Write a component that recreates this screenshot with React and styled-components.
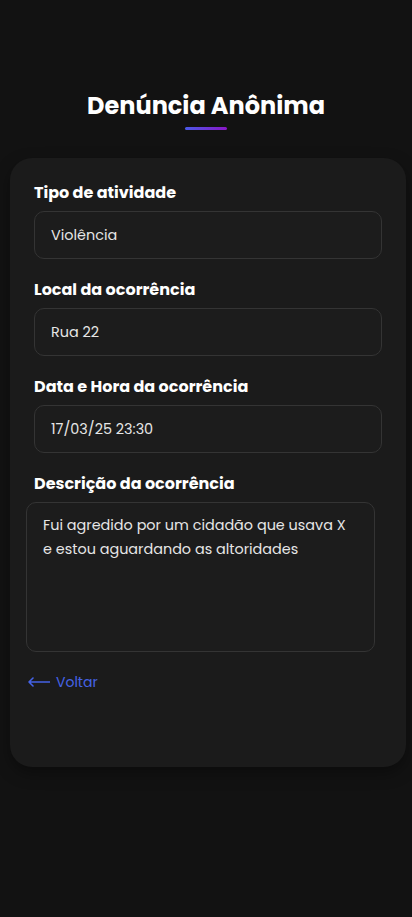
import React from 'react';
import styled, { createGlobalStyle } from 'styled-components';

const GlobalStyle = createGlobalStyle`
  html, body {
    margin: 0;
    padding: 0;
    background: #121212;
  }
  body {
    font-family: "Poppins", "Inter", "Noto Sans", sans-serif;
    color: #ffffff;
  }
`;

const Page = styled.div`
  min-height: 917px;
  background: #121212;
  padding-top: 89px;
  box-sizing: border-box;
`;

const Header = styled.header`
  display: flex;
  flex-direction: column;
  align-items: center;
  margin-bottom: 28px;
`;

const Title = styled.h1`
  margin: 0;
  font-size: 24px;
  line-height: 34px;
  font-weight: 700;
  color: #ffffff;
`;

const Underline = styled.div`
  width: 42px;
  height: 3px;
  margin-top: 4px;
  border-radius: 2px;
  background: linear-gradient(90deg, #4a5ae8, #8a16c6);
`;

const Card = styled.main`
  margin-left: 10px;
  width: 396px;
  box-sizing: border-box;
  background: #1b1b1b;
  border-radius: 22px;
  padding: 25px 24px 73px;
  box-shadow: 0 6px 16px rgba(0, 0, 0, 0.35);
`;

const Field = styled.div`
  display: flex;
  flex-direction: column;
  margin-bottom: ${(p) => (p.$last ? '17px' : '21px')};
`;

const Label = styled.label`
  font-size: 16px;
  line-height: 20px;
  font-weight: 700;
  color: #ffffff;
  margin-bottom: 8px;
`;

const Input = styled.div`
  height: 48px;
  box-sizing: border-box;
  border: 1px solid #343434;
  border-radius: 10px;
  background: #1c1c1c;
  padding: 0 16px;
  display: flex;
  align-items: center;
  font-size: 14.4px;
  color: #e6e6e6;
`;

const TextArea = styled.div`
  height: 150px;
  margin-left: -8px;
  margin-right: 7px;
  box-sizing: border-box;
  border: 1px solid #343434;
  border-radius: 10px;
  background: #1c1c1c;
  padding: 10px 16px 12px;
  font-size: 14.4px;
  line-height: 24px;
  color: #e6e6e6;
`;

const Back = styled.a`
  display: inline-flex;
  align-items: center;
  gap: 6px;
  margin-left: -6px;
  font-size: 14px;
  line-height: 20px;
  color: #4563e6;
  text-decoration: none;
  cursor: pointer;
`;

const fields = [
  { label: 'Tipo de atividade', value: 'Violência' },
  { label: 'Local da ocorrência', value: 'Rua 22' },
  { label: 'Data e Hora da ocorrência', value: '17/03/25 23:30' },
];

export default function App() {
  return (
    <Page>
      <GlobalStyle />
      <Header>
        <Title>Denúncia Anônima</Title>
        <Underline />
      </Header>
      <Card>
        {fields.map((f) => (
          <Field key={f.label}>
            <Label>{f.label}</Label>
            <Input>{f.value}</Input>
          </Field>
        ))}
        <Field $last>
          <Label>Descrição da ocorrência</Label>
          <TextArea>
            Fui agredido por um cidadão que usava X
            <br />
            e estou aguardando as altoridades
          </TextArea>
        </Field>
        <Back>
          <svg width="22" height="10" viewBox="0 0 22 10" fill="none">
            <path d="M1 5H22M1 5L5 1M1 5L5 9" stroke="#4563e6" strokeWidth="1.6" strokeLinecap="round" strokeLinejoin="round" />
          </svg>
          Voltar
        </Back>
      </Card>
    </Page>
  );
}
